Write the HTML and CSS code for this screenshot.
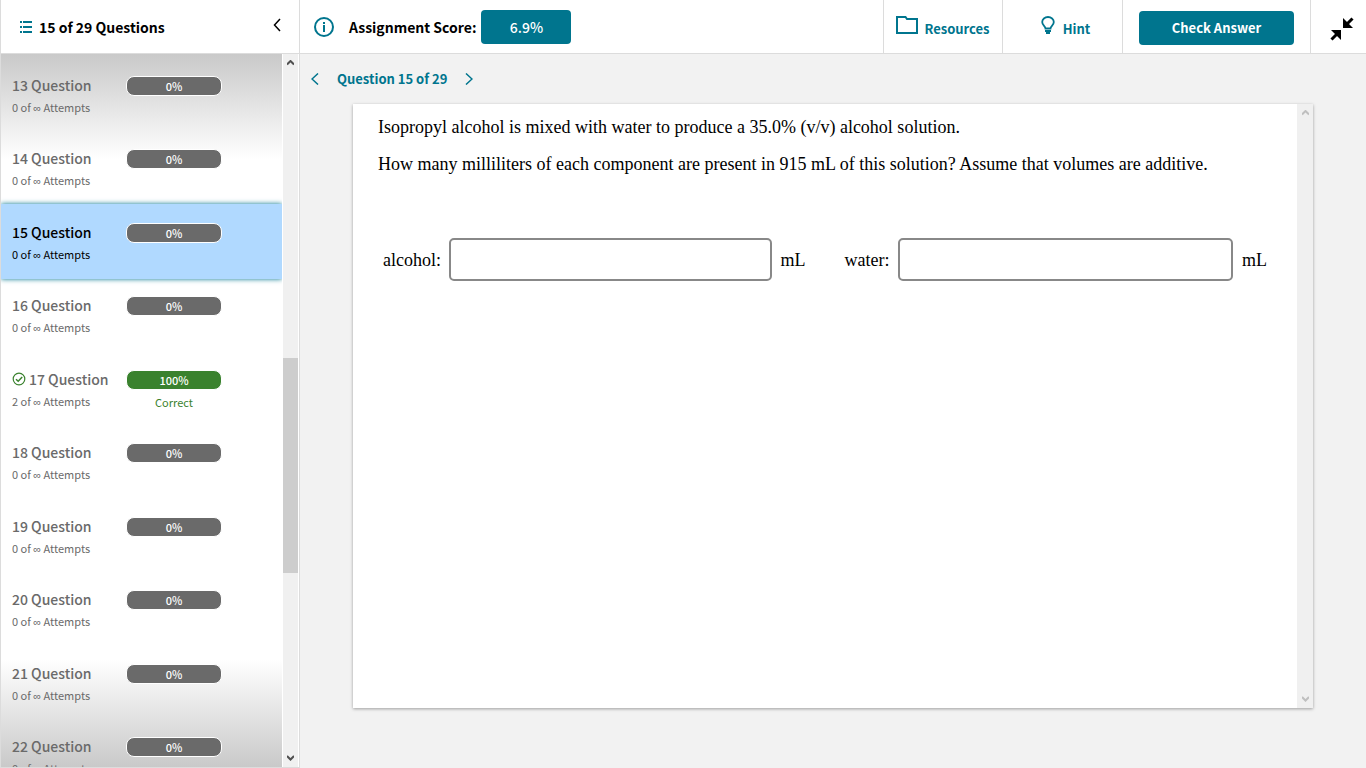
FILE: index.html
```html
<!DOCTYPE html>
<html lang="en">
<head>
  <meta charset="UTF-8">
  <meta name="viewport" content="width=device-width, initial-scale=1.0">
  <title>Question 15 of 29</title>
  <link rel="stylesheet" href="styles.css">
</head>
<body>
  <aside class="sidebar">
    <div class="sidebar-head">
      <svg class="list-icon" width="12" height="12" viewBox="0 0 12 12" fill="currentColor">
        <path d="M0 0h2v2H0zM3 0h9v2H3zM0 5h2v2H0zM3 5h9v2H3zM0 10h2v2H0zM3 10h9v2H3z"/>
      </svg>
      <h2>15 of 29 Questions</h2>
      <button class="collapse" aria-label="Collapse question list">
        <svg width="8" height="14" viewBox="0 0 8 14"><path d="M7 1 1.500 7 7 13" fill="none" stroke="currentColor" stroke-width="1.500"/></svg>
      </button>
    </div>

    <div class="sidebar-body">
      <ul class="questions">
        <li><div class="info"><a href="#q13">13 Question</a><p>0 of <span class="inf">∞</span> Attempts</p></div><div class="result"><span class="pill">0%</span></div></li>
        <li><div class="info"><a href="#q14">14 Question</a><p>0 of <span class="inf">∞</span> Attempts</p></div><div class="result"><span class="pill">0%</span></div></li>
        <li class="active"><div class="info"><a href="#q15">15 Question</a><p>0 of <span class="inf">∞</span> Attempts</p></div><div class="result"><span class="pill">0%</span></div></li>
        <li><div class="info"><a href="#q16">16 Question</a><p>0 of <span class="inf">∞</span> Attempts</p></div><div class="result"><span class="pill">0%</span></div></li>
        <li>
          <div class="info">
            <a href="#q17"><svg class="check" width="14" height="14" viewBox="0 0 14 14" fill="none" stroke="currentColor"><circle cx="7" cy="7" r="5.800" stroke-width="1.200"/><path d="M4 7.200 6.200 9.300 10.200 5" stroke-width="1.500"/></svg>17 Question</a>
            <p>2 of <span class="inf">∞</span> Attempts</p>
          </div>
          <div class="result"><span class="pill pill-correct">100%</span><span class="correct">Correct</span></div>
        </li>
        <li><div class="info"><a href="#q18">18 Question</a><p>0 of <span class="inf">∞</span> Attempts</p></div><div class="result"><span class="pill">0%</span></div></li>
        <li><div class="info"><a href="#q19">19 Question</a><p>0 of <span class="inf">∞</span> Attempts</p></div><div class="result"><span class="pill">0%</span></div></li>
        <li><div class="info"><a href="#q20">20 Question</a><p>0 of <span class="inf">∞</span> Attempts</p></div><div class="result"><span class="pill">0%</span></div></li>
        <li><div class="info"><a href="#q21">21 Question</a><p>0 of <span class="inf">∞</span> Attempts</p></div><div class="result"><span class="pill">0%</span></div></li>
        <li><div class="info"><a href="#q22">22 Question</a><p>0 of <span class="inf">∞</span> Attempts</p></div><div class="result"><span class="pill">0%</span></div></li>
      </ul>
      <div class="scrollbar">
        <svg width="7" height="6" viewBox="0 0 7 6"><path d="M0 4.500 3.500 1 7 4.500" fill="none" stroke="currentColor" stroke-width="2"/></svg>
        <div class="track"><div class="thumb"></div></div>
        <svg width="7" height="6" viewBox="0 0 7 6"><path d="M0 1 3.500 4.500 7 1" fill="none" stroke="currentColor" stroke-width="2"/></svg>
      </div>
    </div>
  </aside>

  <main class="main">
    <header class="topbar">
      <div class="score">
        <svg class="info-icon" width="20" height="20" viewBox="0 0 20 20">
          <circle cx="10" cy="10" r="9" fill="none" stroke="currentColor" stroke-width="2"/>
          <path d="M9 5h2v2H9zM9 8h2v7H9z" fill="currentColor"/>
        </svg>
        <span class="score-label">Assignment Score:</span>
        <span class="score-value">6.9%</span>
      </div>
      <a class="tool resources" href="#resources">
        <svg width="22" height="18" viewBox="0 0 22 18"><path d="M1 17V1h8.500l1.500 2h10v14z" fill="none" stroke="currentColor" stroke-width="2"/></svg>
        <span>Resources</span>
      </a>
      <button class="tool hint">
        <svg width="14" height="18" viewBox="0 0 14 18">
          <path d="M4.500 12.500C4.500 10 1.200 9.500 1.200 6a5.800 5 0 0 1 11.600 0c0 3.500-3.300 4-3.300 6.500z" fill="none" stroke="currentColor" stroke-width="1.800"/>
          <path d="M4 14h6v2H4zM5 16h4v2H5z" fill="currentColor"/>
        </svg>
        <span>Hint</span>
      </button>
      <div class="tool check-box"><button class="check-answer">Check Answer</button></div>
      <button class="tool shrink" aria-label="Exit full screen">
        <svg width="24" height="24" viewBox="0 0 24 24" fill="#000" stroke="#000">
          <path d="M13 1v10h10z" stroke="none"/><path d="M16 8 22.500 1.500" stroke-width="3"/>
          <path d="M11 23V13H1z" stroke="none"/><path d="M8 16 1.500 22.500" stroke-width="3"/>
        </svg>
      </button>
    </header>

    <nav class="pager">
      <button aria-label="Previous question"><svg width="8" height="12" viewBox="0 0 8 12"><path d="M7 0.500 1 6 7 11.500" fill="none" stroke="currentColor" stroke-width="1.500"/></svg></button>
      <span>Question 15 of 29</span>
      <button aria-label="Next question"><svg width="8" height="12" viewBox="0 0 8 12"><path d="M1 0.500 7 6 1 11.500" fill="none" stroke="currentColor" stroke-width="1.500"/></svg></button>
    </nav>

    <section class="card">
      <div class="problem">
        <p>Isopropyl alcohol is mixed with water to produce a 35.0% (v/v) alcohol solution.</p>
        <p>How many milliliters of each component are present in 915 mL of this solution? Assume that volumes are additive.</p>
        <form class="answers">
          <label for="alcohol">alcohol:</label>
          <input id="alcohol" type="text" autocomplete="off">
          <span class="unit">mL</span>
          <label class="second" for="water">water:</label>
          <input id="water" type="text" autocomplete="off">
          <span class="unit">mL</span>
        </form>
      </div>
      <div class="scrollbar disabled">
        <svg width="7" height="6" viewBox="0 0 7 6"><path d="M0 4.500 3.500 1 7 4.500" fill="none" stroke="currentColor" stroke-width="2"/></svg>
        <div class="track"></div>
        <svg width="7" height="6" viewBox="0 0 7 6"><path d="M0 1 3.500 4.500 7 1" fill="none" stroke="currentColor" stroke-width="2"/></svg>
      </div>
    </section>
  </main>
</body>
</html>
```

FILE: styles.css
```css
:root {
  --teal: #00758e;
  --line: #dcdcdc;
  --gray: #6a6a6a;
  --green: #3a822e;
}

* {
  box-sizing: border-box;
}

body {
  margin: 0;
  height: 100vh;
  display: flex;
  overflow: hidden;
  background: #f2f2f2;
  color: #000;
  font-family: "Noto Sans CJK SC", "Open Sans", sans-serif;
  font-size: 14px;
  font-weight: 500;
  line-height: 20px;
}

h2,
p,
ul {
  margin: 0;
  padding: 0;
}

button {
  border: none;
  padding: 0;
  background: none;
  color: inherit;
  font: inherit;
  cursor: pointer;
}

a {
  color: inherit;
  text-decoration: none;
}

svg {
  display: block;
  flex: none;
}

/* sidebar */
.sidebar {
  width: 300px;
  flex: none;
  display: flex;
  flex-direction: column;
  background: #fff;
  border: 1px solid var(--line);
  border-top: none;
}

.sidebar-head {
  height: 54px;
  flex: none;
  display: flex;
  align-items: center;
  padding: 0 18px 0 19px;
  border-bottom: 1px solid var(--line);
}

.list-icon {
  color: var(--teal);
}

.sidebar-head h2 {
  margin-left: 7px;
  font-size: 14px;
  font-weight: 700;
}

.collapse {
  margin-left: auto;
  padding-bottom: 3px;
}

.sidebar-body {
  flex: 1;
  min-height: 0;
  display: flex;
}

.questions {
  flex: 1;
  overflow: hidden;
  list-style: none;
  padding-top: 3px;
  color: var(--gray);
  background: linear-gradient(#c9c9c9, #fff 105px, #fff calc(100% - 108px), #c9c9c9);
}

.questions li {
  display: flex;
  height: 73px;
  padding: 17px 11px 0;
}

.questions li:nth-child(even) {
  height: 74px;
}

.questions li.active {
  height: 75px;
  margin-bottom: -2px;
  color: #000;
  background: #b0d9ff;
  box-shadow: 0 0 5px var(--teal);
}

.info {
  width: 114px;
}

.info a {
  display: flex;
  align-items: center;
  line-height: 22px;
}

.info p {
  font-size: 11px;
  font-weight: 400;
  line-height: 22px;
}

.inf {
  font-family: "Liberation Sans", Arial, sans-serif;
}

.check {
  margin-right: 3px;
  color: var(--green);
}

.result {
  width: 96px;
  display: flex;
  flex-direction: column;
  text-align: center;
  font-size: 11px;
}

.pill {
  height: 20px;
  margin-top: 2px;
  border: 1px solid #fff;
  border-radius: 8px;
  background: #6a6a6a;
  color: #fff;
  line-height: 18px;
}

.pill-correct {
  background: var(--green);
}

.correct {
  margin-top: 2px;
  color: var(--green);
  font-weight: 400;
}

.scrollbar {
  width: 16px;
  flex: none;
  display: flex;
  flex-direction: column;
  align-items: center;
  padding: 6px 0;
  background: #f0f0f0;
  color: #505050;
}

.sidebar .scrollbar {
  border-left: 1px solid #fff;
  margin-right: 1px;
}

.track {
  flex: 1;
  align-self: stretch;
  display: flex;
  flex-direction: column;
}

.track::before {
  content: "";
  flex: 292;
}

.track::after {
  content: "";
  flex: 182;
}

.thumb {
  flex: 215;
  background: #cdcdcd;
}

.disabled {
  color: #bfbfbf;
}

/* top bar */
.main {
  flex: 1;
  min-width: 0;
  display: flex;
  flex-direction: column;
}

.topbar {
  height: 54px;
  flex: none;
  display: flex;
  background: #fff;
  border-bottom: 1px solid var(--line);
}

.score {
  flex: 1;
  display: flex;
  align-items: center;
  padding-left: 14px;
}

.info-icon {
  color: var(--teal);
}

.score-label {
  margin: 0 5px 0 15px;
  font-weight: 700;
}

.score-value {
  width: 90px;
  border-radius: 4px;
  background: var(--teal);
  color: #fff;
  line-height: 34px;
  text-align: center;
}

.tool {
  display: flex;
  align-items: center;
  justify-content: center;
  border-left: 1px solid var(--line);
  color: var(--teal);
  font-size: 13px;
  font-weight: 700;
}

.tool span {
  padding-top: 4px;
}

.resources {
  width: 119px;
  gap: 6px;
}

.hint {
  width: 120px;
  gap: 8px;
  padding-left: 6px;
}

.resources svg,
.hint svg {
  margin-bottom: 3px;
}

.check-box {
  width: 188px;
}

.check-answer {
  width: 155px;
  margin-top: 2px;
  border-radius: 4px;
  background: var(--teal);
  color: #fff;
  line-height: 34px;
}

.shrink {
  width: 56px;
  padding: 4px 0 0 6px;
}

/* question */
.pager {
  height: 50px;
  flex: none;
  display: flex;
  align-items: center;
  gap: 18px;
  padding-left: 11px;
  color: var(--teal);
  font-size: 13px;
  font-weight: 700;
}

.card {
  flex: 1;
  min-height: 0;
  display: flex;
  margin: 0 53px 60px;
  background: #fff;
  box-shadow: 0 1px 3px rgba(0, 0, 0, 0.35);
}

.problem {
  flex: 1;
  padding: 13px 25px;
  font-family: "Liberation Serif", "Times New Roman", serif;
  font-size: 18px;
  font-weight: 400;
}

.problem p {
  margin-bottom: 17px;
}

.answers {
  display: flex;
  align-items: center;
  margin-top: 64px;
  padding: 0 5px;
}

.answers input {
  flex: 322;
  min-width: 0;
  height: 43px;
  margin: 0 9px 0 8px;
  padding: 0 10px;
  border: 2px solid #888;
  border-radius: 5px;
  font: inherit;
}

.answers #water {
  flex: 336;
}

.answers .second {
  margin-left: 39px;
}
```
